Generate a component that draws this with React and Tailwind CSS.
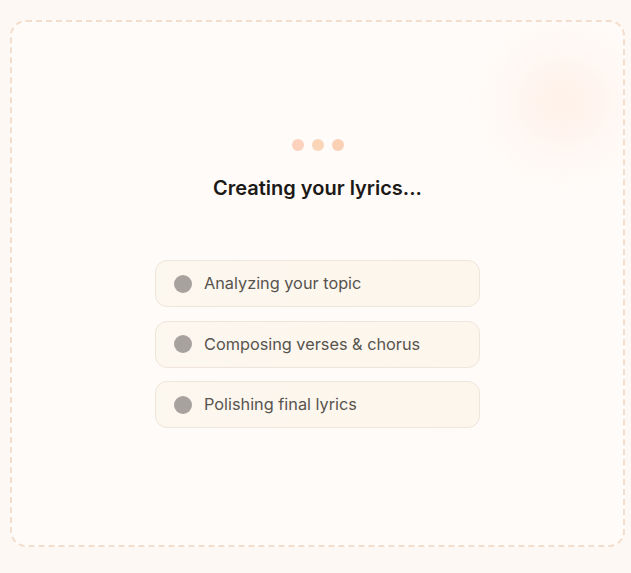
import React from 'react';

const steps = ["Analyzing your topic", "Composing verses & chorus", "Polishing final lyrics"];

const App = () => {
    return (
        <div className="min-h-screen w-full bg-[#fdf8f3] px-[10px] pt-[20px] font-['Inter',sans-serif]">
            <div className="relative w-[615px] h-[527px] rounded-2xl border-2 border-dashed border-[#f3ddcc] bg-[#fffbf8] overflow-hidden">
                <div className="absolute right-[10px] top-[35px] w-[100px] h-[90px] rounded-full bg-[#ffeadf] blur-xl opacity-60"></div>
                <div className="relative flex flex-col items-center pt-[117px]">
                    <div className="flex gap-2">
                        <span className="w-3 h-3 rounded-full bg-[#fcd1bd]"></span>
                        <span className="w-3 h-3 rounded-full bg-[#fbd5b8]"></span>
                        <span className="w-3 h-3 rounded-full bg-[#fbd1b6]"></span>
                    </div>
                    <h2 className="mt-[23px] text-[20px] leading-7 font-semibold text-[#1c1917]">Creating your lyrics...</h2>
                    <div className="mt-[58px] flex flex-col gap-[13.5px]">
                        {steps.map((s) => (
                            <div key={s} className="w-[325px] h-[47px] flex items-center gap-3 px-[18px] rounded-xl border border-[#efe5da] bg-gradient-to-r from-[#fcf7ef] to-[#fdf6ec]">
                                <span className="w-[18px] h-[18px] rounded-full bg-[#a8a29e]"></span>
                                <span className="text-[16.3px] text-[#57534e]">{s}</span>
                            </div>
                        ))}
                    </div>
                </div>
            </div>
        </div>
    );
};

export default App;
